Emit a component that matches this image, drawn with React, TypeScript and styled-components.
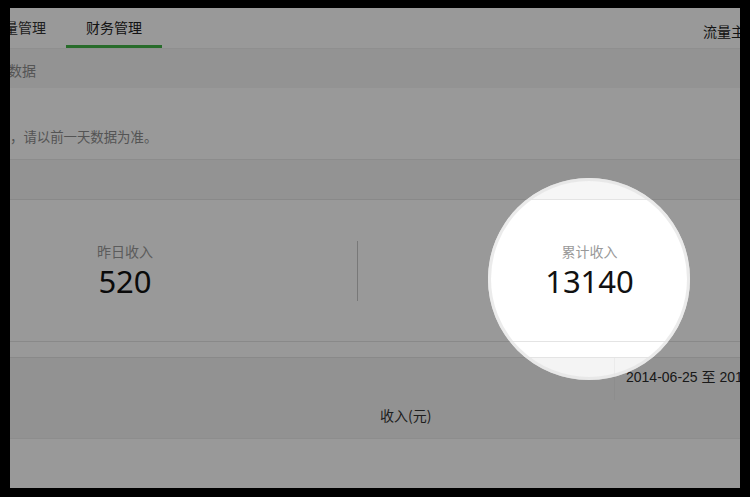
import * as React from 'react';
import styled, { createGlobalStyle } from 'styled-components';

const GlobalStyle = createGlobalStyle`
  html, body {
    margin: 0;
    padding: 0;
    background: #000;
  }
  body {
    font-family: "Noto Sans CJK SC", "Liberation Sans", sans-serif;
    color: #333;
  }
`;

const Frame = styled.div`
  width: 750px;
  height: 497px;
  box-sizing: border-box;
  padding: 8px 10px 9px 10px;
  background: #000;
`;

const Viewport = styled.div`
  position: relative;
  width: 730px;
  height: 480px;
  overflow: hidden;
  background: #fff;
`;

// the page is wider than the crop, and scrolled a little to the right
const Page = styled.div`
  width: 928px;
  margin-left: -117px;
  display: flex;
  flex-direction: column;
`;

const TabBar = styled.div`
  display: flex;
  align-items: stretch;
  height: 40px;
  padding-left: 77px;
  padding-right: 76px;
  background: #fff;
`;

const Tab = styled.div<{ $active?: boolean }>`
  display: flex;
  align-items: center;
  justify-content: center;
  width: 96px;
  box-sizing: border-box;
  padding-top: 1px;
  font-size: 14px;
  color: ${(p) => (p.$active ? '#222' : '#333')};
  border-bottom: 3px solid ${(p) => (p.$active ? '#44b549' : 'transparent')};
`;

const TabRight = styled.div`
  margin-left: auto;
  display: flex;
  align-items: center;
  padding-top: 5px;
  font-size: 14px;
  color: #222;
  white-space: nowrap;
`;

const SectionHead = styled.div`
  height: 40px;
  display: flex;
  align-items: center;
  padding-left: 115px;
  padding-top: 3px;
  box-sizing: border-box;
  background: #f5f5f5;
  border-top: 1px solid #efefef;
  font-size: 14px;
  color: #8d8d8d;
`;

const Notice = styled.div`
  height: 71px;
  box-sizing: border-box;
  padding: 38px 0 0 117px;
  font-size: 13.4px;
  line-height: 20px;
  color: #8d8d8d;
  background: #fff;
`;

const Band = styled.div`
  height: 39px;
  background: #f6f6f6;
  border-top: 1px solid #e9e9e9;
`;

const Card = styled.div`
  height: 143px;
  display: flex;
  align-items: center;
  background: #fff;
  border-top: 1px solid #e4e4e4;
  border-bottom: 1px solid #e4e4e4;
  box-sizing: border-box;
`;

const StatCol = styled.div<{ $divider?: boolean }>`
  width: 464px;
  height: 60px;
  display: flex;
  flex-direction: column;
  align-items: center;
  border-left: ${(p) => (p.$divider ? '1px solid #c8c8c8' : 'none')};
  box-sizing: border-box;
`;

const StatLabel = styled.div`
  font-size: 14px;
  line-height: 20px;
  color: #999;
`;

const StatValue = styled.div`
  font-family: "Noto Sans", "Open Sans", sans-serif;
  font-size: 31px;
  line-height: 40px;
  color: #111;
`;

const Gap = styled.div`
  height: 15px;
  background: #fff;
  border-bottom: 1px solid #e4e4e4;
`;

const TableArea = styled.div`
  height: 80px;
  display: flex;
  flex-direction: column;
  background: #f4f4f4;
  border-bottom: 1px solid #ececec;
`;

const Toolbar = styled.div`
  height: 42px;
  display: flex;
  padding-left: 721px;
`;

const DateBox = styled.div`
  flex: 1;
  display: flex;
  align-items: center;
  padding: 0 0 6px 11px;
  border-left: 1px solid #ebebeb;
  font-family: "Liberation Sans", "Noto Sans CJK SC", sans-serif;
  font-size: 14px;
  color: #2a2a2a;
  white-space: nowrap;
`;

const HeadRow = styled.div`
  flex: 1;
  display: flex;
  align-items: center;
  padding-left: 487px;
  padding-bottom: 8px;
  font-size: 14px;
  color: #333;
`;

const Rest = styled.div`
  height: 60px;
  background: #fff;
`;

// spotlight: a hole in the dim layer around the total income figure
const Spotlight = styled.div`
  position: absolute;
  left: 478px;
  top: 170px;
  width: 202px;
  height: 202px;
  box-sizing: border-box;
  border-radius: 50%;
  border: 3px solid rgba(226, 226, 226, 0.7);
  box-shadow: 0 0 0 1000px rgba(0, 0, 0, 0.4);
  pointer-events: none;
`;

export default function App() {
  return (
    <>
      <GlobalStyle />
      <Frame>
        <Viewport>
          <Page>
            <TabBar>
              <Tab>流量管理</Tab>
              <Tab $active>财务管理</Tab>
              <TabRight>流量主</TabRight>
            </TabBar>
            <SectionHead>数据</SectionHead>
            <Notice>，请以前一天数据为准。</Notice>
            <Band />
            <Card>
              <StatCol>
                <StatLabel>昨日收入</StatLabel>
                <StatValue>520</StatValue>
              </StatCol>
              <StatCol $divider>
                <StatLabel>累计收入</StatLabel>
                <StatValue>13140</StatValue>
              </StatCol>
            </Card>
            <Gap />
            <TableArea>
              <Toolbar>
                <DateBox>2014-06-25 至 2014-07-01</DateBox>
              </Toolbar>
              <HeadRow>收入(元)</HeadRow>
            </TableArea>
            <Rest />
          </Page>
          <Spotlight />
        </Viewport>
      </Frame>
    </>
  );
}
